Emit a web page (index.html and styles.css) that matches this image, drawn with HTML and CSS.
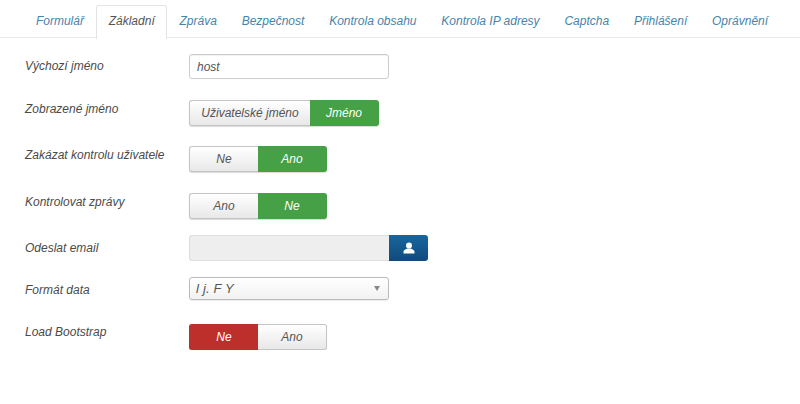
FILE: index.html
```html
<!DOCTYPE html>
<html lang="cs">
<head>
<title>Nastavení</title>
<meta charset="utf-8">
<link rel="stylesheet" href="styles.css">
</head>
<body>
	<ul class="tabs">
		<li class="tab">Formulář</li>
		<li class="tab active">Základní</li>
		<li class="tab">Zpráva</li>
		<li class="tab">Bezpečnost</li>
		<li class="tab">Kontrola obsahu</li>
		<li class="tab">Kontrola IP adresy</li>
		<li class="tab">Captcha</li>
		<li class="tab">Přihlášení</li>
		<li class="tab">Oprávnění</li>
	</ul>

	<div class="form">
		<div class="row row_name">
			<div class="label">Výchozí jméno</div>
			<input class="text_input" type="text" value="host">
		</div>
		<div class="row row_display">
			<div class="label">Zobrazené jméno</div>
			<div class="toggle">
				<span class="opt opt_long">Uživatelské jméno</span>
				<span class="opt opt_short on_green">Jméno</span>
			</div>
		</div>
		<div class="row row_user">
			<div class="label">Zakázat kontrolu uživatele</div>
			<div class="toggle">
				<span class="opt">Ne</span>
				<span class="opt on_green">Ano</span>
			</div>
		</div>
		<div class="row row_check">
			<div class="label">Kontrolovat zprávy</div>
			<div class="toggle">
				<span class="opt">Ano</span>
				<span class="opt on_green">Ne</span>
			</div>
		</div>
		<div class="row row_email">
			<div class="label">Odeslat email</div>
			<div class="user_field">
				<div class="user_value"></div>
				<div class="user_btn">
					<svg width="12" height="12" viewBox="0 0 12 12"><circle cx="6" cy="3.4" r="3" fill="#fff"/><path d="M0.5 11.5V9.6C0.5 8 3 7.2 4.4 6.6H7.6C9 7.2 11.5 8 11.5 9.6V11.5Z" fill="#fff"/></svg>
				</div>
			</div>
		</div>
		<div class="row row_date">
			<div class="label">Formát data</div>
			<div class="select">
				<span>l j. F Y</span>
				<span class="arrow"></span>
			</div>
		</div>
		<div class="row row_bootstrap">
			<div class="label">Load Bootstrap</div>
			<div class="toggle">
				<span class="opt on_red">Ne</span>
				<span class="opt">Ano</span>
			</div>
		</div>
	</div>
</body>
</html>
```

FILE: styles.css
```css
body{
	margin: 0;
	background-color: #fff;
	color: #555;
	font-family: "Liberation Sans", Arial, sans-serif;
	font-size: 12px;
	font-style: italic;
}

/* tabs */
.tabs{
	display: flex;
	list-style: none;
	margin: 5px 0 0 0;
	padding: 0 0 0 23.5px;
	height: 32px;
	border-bottom: 1px solid #ebebeb;
}
.tab{
	padding: 0 11.4px;
	height: 32px;
	line-height: 30px;
	border: 1px solid transparent;
	border-bottom: 0;
	color: #4484ac;
	white-space: nowrap;
}
.tab.active{
	height: 33px;
	background-color: #fff;
	border-color: #e4e4e4;
	border-radius: 3px 3px 0 0;
	color: #555;
}

/* rows */
.form{
	padding-left: 25px;
}
.row{
	display: flex;
}
.label{
	width: 164px;
	flex: none;
	line-height: 18px;
	color: #4a4a4a;
}
.row_name{ margin-top: 16px; }
.row_name .label{ padding-top: 3px; }
.row_display{ margin-top: 21px; }
.row_user{ margin-top: 20px; }
.row_check{ margin-top: 21px; }
.row_email{ margin-top: 16px; }
.row_email .label{ padding-top: 4px; }
.row_date{ margin-top: 16px; }
.row_date .label{ padding-top: 4px; }
.row_bootstrap{ margin-top: 24px; }
.row_bootstrap .label{ margin-top: -1px; }

/* inputs */
.text_input{
	box-sizing: border-box;
	width: 200px;
	height: 25px;
	margin: 0;
	padding: 0 7px;
	border: 1px solid #ccc;
	border-radius: 3px;
	color: #555;
	font: italic 12px "Liberation Sans", Arial, sans-serif;
	box-shadow: inset 0 1px 1px rgba(0,0,0,0.06);
}
.user_field{
	display: flex;
	height: 26px;
}
.user_value{
	box-sizing: border-box;
	width: 200px;
	background-color: #eee;
	border: 1px solid #ddd;
	border-right: 0;
	border-radius: 3px 0 0 3px;
}
.user_btn{
	display: flex;
	align-items: center;
	justify-content: center;
	width: 39px;
	background: linear-gradient(#17669f, #124a7c);
	border-radius: 0 3px 3px 0;
}
.select{
	box-sizing: border-box;
	display: flex;
	justify-content: space-between;
	align-items: center;
	width: 200px;
	height: 23px;
	padding: 0 8px 0 6px;
	background: linear-gradient(#fff, #f2f2f2);
	border: 1px solid #bbb;
	border-radius: 3px;
	font-size: 13px;
	letter-spacing: 0.2px;
	box-shadow: 0 1px 1px rgba(0,0,0,0.08);
}
.arrow{
	width: 0;
	height: 0;
	border-left: 3px solid transparent;
	border-right: 3px solid transparent;
	border-top: 5px solid #888;
}

/* toggles */
.toggle{
	display: flex;
	height: 26px;
	border-radius: 3px;
	box-shadow: 0 1px 1px rgba(0,0,0,0.15);
}
.opt{
	box-sizing: border-box;
	width: 69px;
	line-height: 24px;
	text-align: center;
	color: #555;
	background: linear-gradient(#fff, #e8e8e8);
	border: 1px solid #c4c4c4;
}
.opt:first-child{
	border-radius: 3px 0 0 3px;
	border-right: 0;
}
.opt:last-child{
	border-radius: 0 3px 3px 0;
	border-left: 0;
}
.opt_long{ width: 121px; }
.opt_short{ width: 69px; }
.opt.on_green{
	background: #46a046;
	border-color: #46a046;
	color: #fff;
}
.opt.on_red{
	background: #bd2f2a;
	border-color: #bd2f2a;
	color: #fff;
}
```
